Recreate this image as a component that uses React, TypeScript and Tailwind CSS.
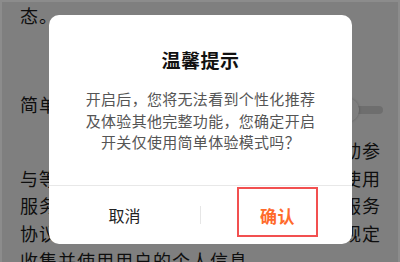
import React from "react";

const font = { fontFamily: '"Noto Sans CJK SC", "Noto Sans", sans-serif' };

export default function App() {
  const lines = [
    "简单体验模式下，不提供推荐、互动参",
    "与等功能，您仍可浏览基础内容并正常使用",
    "服务。我们按照《用户协议》中的相关服务",
    "协议及《隐私政策》等法律法规的相关规定",
    "收集并使用用户的个人信息。",
  ];
  return (
    <div className="relative w-[400px] h-[262px] overflow-hidden bg-white" style={font}>
      {/* background page */}
      <div className="flex flex-col pl-[20px] pt-[1px] text-[18px] tracking-[1px] text-[#1c1c1c]">
        <div className="leading-[28px] h-[28px]">态。</div>
        <div className="mt-[61px] h-[28px] flex items-center justify-between pr-[17px]">
          <span className="leading-[28px]">简单体验模式</span>
          <div className="relative w-[40px] h-[8px] rounded-full bg-[#dcdcdc] mt-[12px]">
            <div className="absolute left-[-8px] top-[-8px] w-[24px] h-[24px] rounded-full bg-white shadow-[0_0_3px_rgba(0,0,0,0.25)]" />
          </div>
        </div>
        <div className="mt-[19px] flex flex-col">
          {lines.map((l, i) => (
            <div
              key={i}
              className={`whitespace-nowrap leading-[27.5px] h-[27.5px] ${i === 0 ? "pl-[38px]" : ""}`}
            >
              {l}
            </div>
          ))}
        </div>
      </div>

      {/* dim overlay */}
      <div className="absolute inset-0 bg-black/50" />
      <div className="absolute inset-0 border-t-2 border-x-2 border-white/10" />

      {/* dialog */}
      <div className="absolute left-[49px] top-[15px] w-[303px] h-[229px] rounded-[10px] bg-white flex flex-col">
        <div className="h-[170px] flex flex-col items-center pt-[33px]">
          <div className="text-[19px] leading-[24px] font-bold text-[#111] tracking-[0.5px]">温馨提示</div>
          <div className="mt-[16px] text-[15px] leading-[21.5px] text-[#555] tracking-[0.3px] text-center">
            <div>开启后，您将无法看到个性化推荐</div>
            <div>及体验其他完整功能，您确定开启</div>
            <div>开关仅使用简单体验模式吗？</div>
          </div>
        </div>
        <div className="h-px bg-[#e8e8e8]" />
        <div className="flex-1 flex items-stretch">
          <div className="flex-1 flex items-center justify-center text-[16px] text-[#222]">取消</div>
          <div className="w-px h-[18px] bg-[#e6e6e6] self-center" />
          <div className="flex-1 flex justify-center">
            <div className="mt-px ml-[2px] w-[81px] h-[50px] border-2 border-[#f25050] flex items-center justify-center pt-[8px] text-[17px] font-bold text-[#ff6a2b] tracking-[0.5px]">
              确认
            </div>
          </div>
        </div>
      </div>
    </div>
  );
}
